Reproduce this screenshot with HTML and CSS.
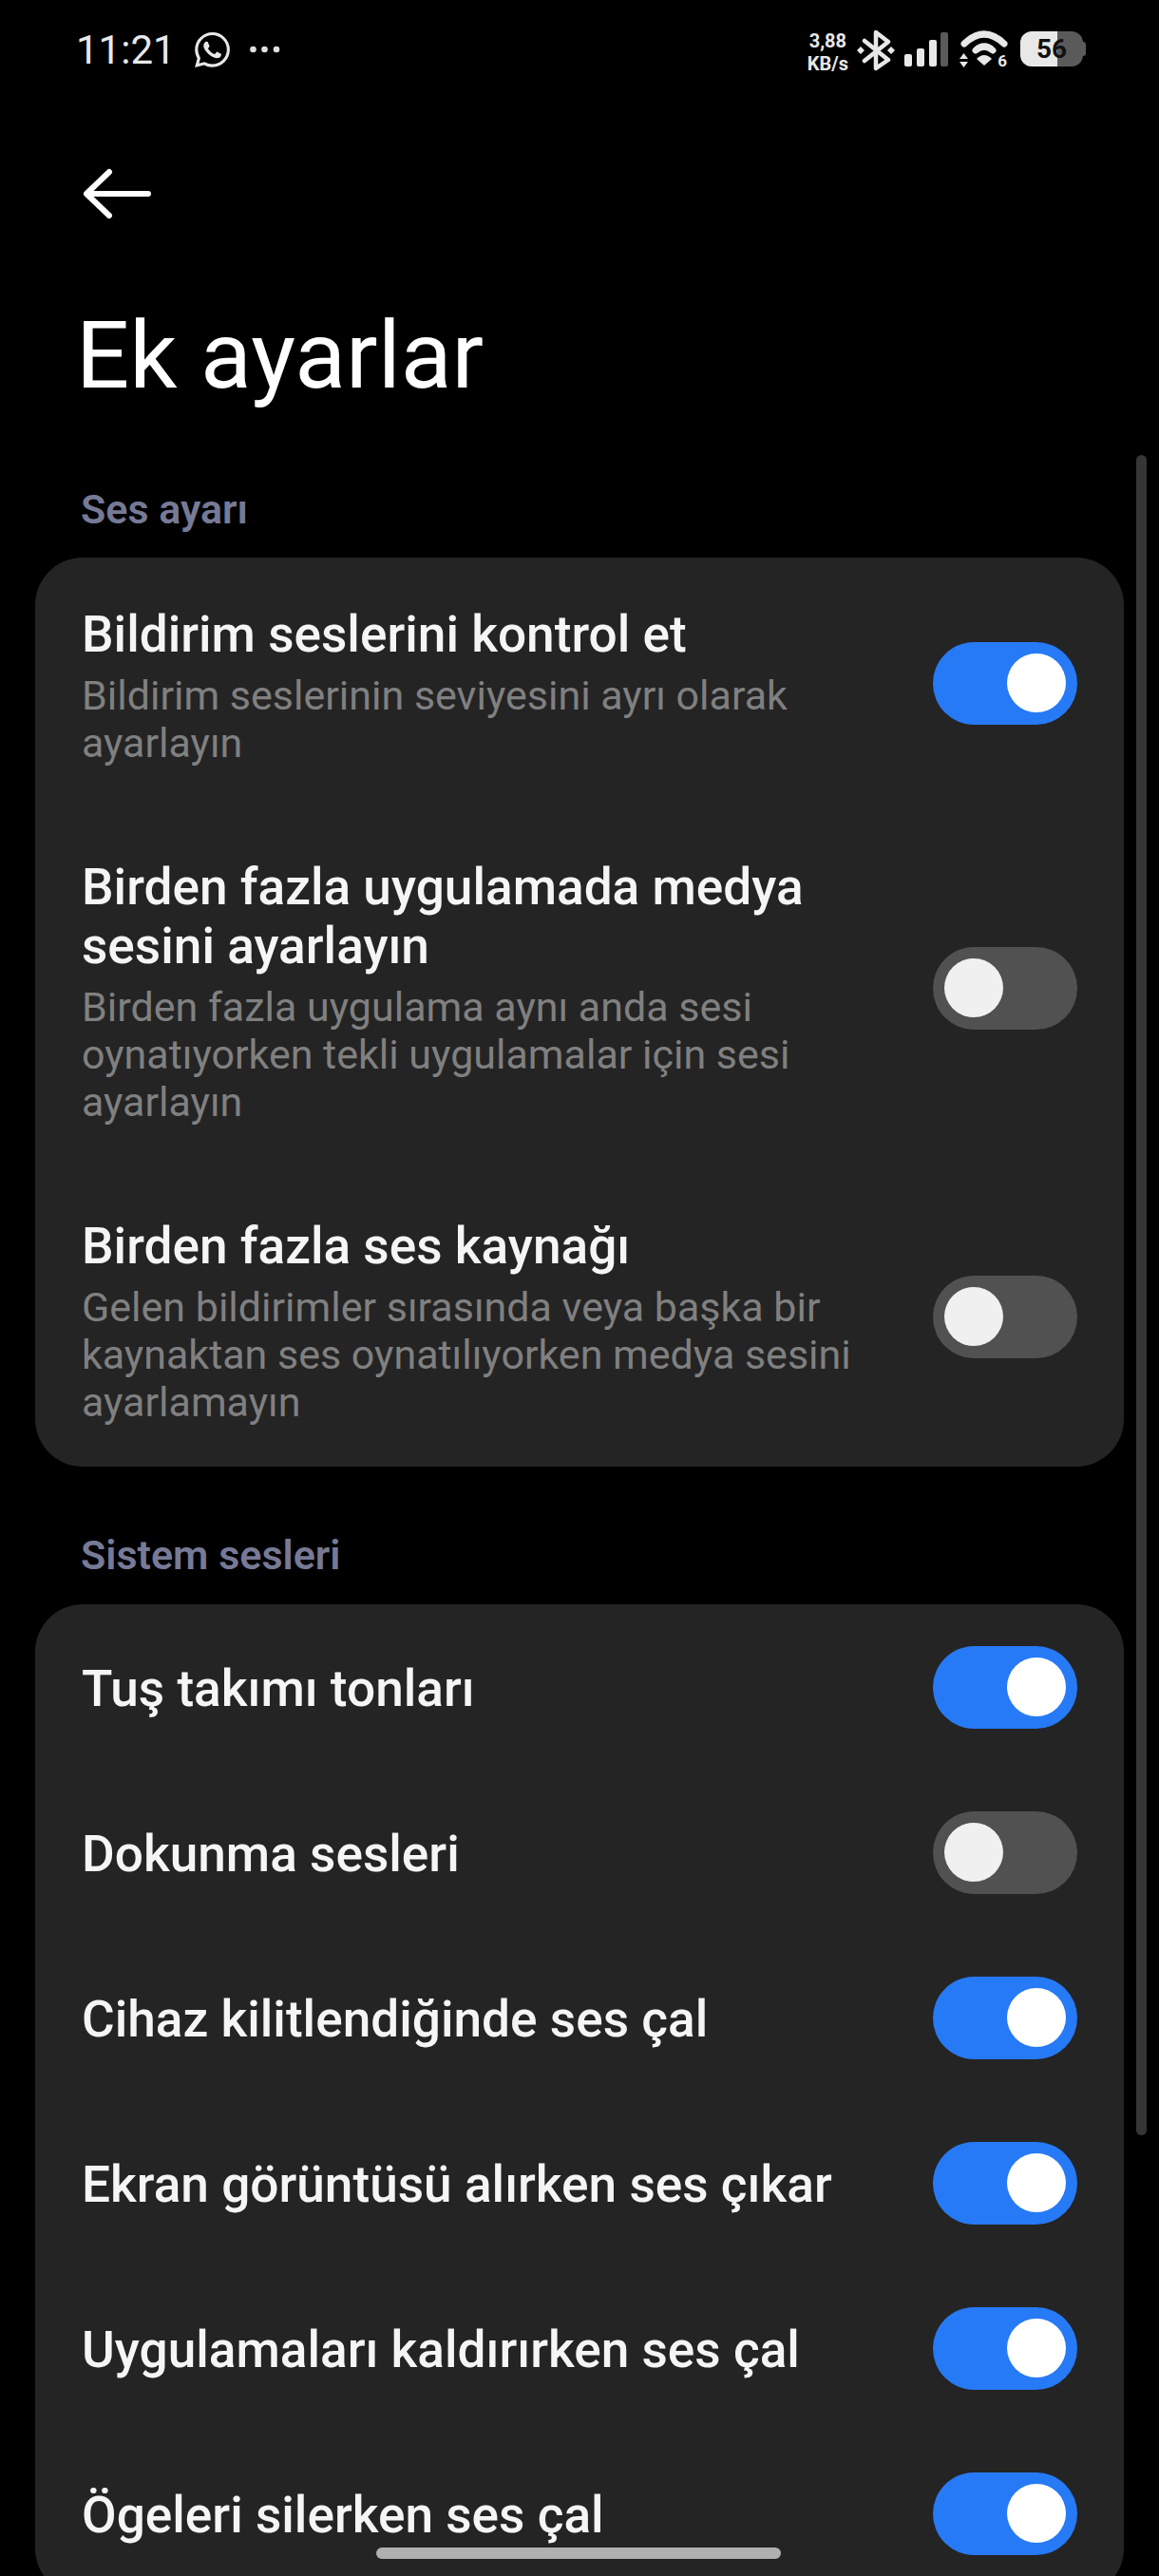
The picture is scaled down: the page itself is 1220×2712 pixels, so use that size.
FILE: index.html
```html
<!DOCTYPE html>
<html lang="tr">
<head>
    <meta charset="UTF-8">
    <meta name="viewport" content="width=device-width, initial-scale=1.0">
    <title>Ek ayarlar</title>
    <link rel="stylesheet" href="styles.css">
</head>
<body>
    <div class="status-bar">
        <div class="status-left">
            <span class="clock">11:21</span>
            <svg class="icon-whatsapp" viewBox="0 0 24 24"><path fill="#e8e8e8" d="M17.472 14.382c-.297-.149-1.758-.867-2.03-.967-.273-.099-.471-.148-.67.15-.197.297-.767.966-.94 1.164-.173.199-.347.223-.644.075-.297-.15-1.255-.463-2.39-1.475-.883-.788-1.48-1.761-1.653-2.059-.173-.297-.018-.458.13-.606.134-.133.298-.347.446-.52.149-.174.198-.298.298-.497.099-.198.05-.371-.025-.52-.075-.149-.669-1.612-.916-2.207-.242-.579-.487-.5-.669-.51-.173-.008-.371-.01-.57-.01-.198 0-.52.074-.792.372-.272.297-1.04 1.016-1.04 2.479 0 1.462 1.065 2.875 1.213 3.074.149.198 2.096 3.2 5.077 4.487.709.306 1.262.489 1.694.625.712.227 1.36.195 1.871.118.571-.085 1.758-.719 2.006-1.413.248-.694.248-1.289.173-1.413-.074-.124-.272-.198-.57-.347m-5.421 7.403h-.004a9.87 9.87 0 01-5.031-1.378l-.361-.214-3.741.982.998-3.648-.235-.374a9.86 9.86 0 01-1.51-5.26c.001-5.45 4.436-9.884 9.888-9.884 2.64 0 5.122 1.03 6.988 2.898a9.825 9.825 0 012.893 6.994c-.003 5.45-4.437 9.884-9.885 9.884m8.413-18.297A11.815 11.815 0 0012.05 0C5.495 0 .16 5.335.157 11.892c0 2.096.547 4.142 1.588 5.945L.057 24l6.305-1.654a11.882 11.882 0 005.683 1.448h.005c6.554 0 11.89-5.335 11.893-11.893a11.821 11.821 0 00-3.48-8.413z"/></svg>
            <svg class="icon-dots" viewBox="0 0 32 8"><circle cx="3.5" cy="4" r="3.3" fill="#e0e0e0"/><circle cx="15.5" cy="4" r="3.3" fill="#e0e0e0"/><circle cx="28" cy="4" r="3.3" fill="#e0e0e0"/></svg>
        </div>
        <div class="status-right">
            <div class="speed"><span>3,88</span><span>KB/s</span></div>
            <svg class="icon-bt" viewBox="0 0 40 44"><path d="M8 12 33 32 20 41V3L33 13 8 33" fill="none" stroke="#e8e8e8" stroke-width="4.5" stroke-linejoin="round" stroke-linecap="round"/><path d="M4 18l4 4-4 4-4-4zM36 18l4 4-4 4-4-4z" fill="#e8e8e8"/></svg>
            <svg class="icon-signal" viewBox="0 0 46 36"><rect x="0" y="23" width="8" height="13" rx="2" fill="#e8e8e8"/><rect x="13" y="17" width="8" height="19" rx="2" fill="#e8e8e8"/><rect x="26" y="8" width="8" height="28" rx="2" fill="#e8e8e8"/><rect x="38" y="0" width="8" height="36" rx="2" fill="#5a5a5a"/></svg>
            <div class="wifi">
                <svg class="icon-wifi" viewBox="0 0 52 40"><path d="M5 14Q26-6 47 14" fill="none" stroke="#e8e8e8" stroke-width="7" stroke-linecap="round"/><path d="M17 21Q26 13 35 21" fill="none" stroke="#e8e8e8" stroke-width="7" stroke-linecap="round"/><path d="M18 30Q26 22 34 30L26 37Z" fill="#e8e8e8"/><path d="M4.500 24 9 30H0ZM4.500 39 0 33H9Z" fill="#e8e8e8"/></svg>
                <span class="wifi-num">6</span>
            </div>
            <div class="battery">56</div>
        </div>
    </div>

    <div class="back-row">
        <svg class="icon-back" viewBox="0 0 78 56"><path d="M3 28H68M27 5 3 28 27 51" fill="none" stroke="#fff" stroke-width="6" stroke-linecap="round" stroke-linejoin="round"/></svg>
    </div>

    <h1 class="page-title">Ek ayarlar</h1>

    <h2 class="section-label">Ses ayarı</h2>
    <div class="card">
        <div class="row row-first">
            <div class="row-text">
                <div class="row-title">Bildirim seslerini kontrol et</div>
                <div class="row-desc">Bildirim seslerinin seviyesini ayrı olarak ayarlayın</div>
            </div>
            <div class="toggle on"></div>
        </div>
        <div class="row">
            <div class="row-text">
                <div class="row-title">Birden fazla uygulamada medya sesini ayarlayın</div>
                <div class="row-desc">Birden fazla uygulama aynı anda sesi oynatıyorken tekli uygulamalar için sesi ayarlayın</div>
            </div>
            <div class="toggle"></div>
        </div>
        <div class="row row-last">
            <div class="row-text">
                <div class="row-title">Birden fazla ses kaynağı</div>
                <div class="row-desc">Gelen bildirimler sırasında veya başka bir kaynaktan ses oynatılıyorken medya sesini ayarlamayın</div>
            </div>
            <div class="toggle"></div>
        </div>
    </div>

    <h2 class="section-label section-second">Sistem sesleri</h2>
    <div class="card">
        <div class="row row-single"><div class="row-title">Tuş takımı tonları</div><div class="toggle on"></div></div>
        <div class="row row-single"><div class="row-title">Dokunma sesleri</div><div class="toggle"></div></div>
        <div class="row row-single"><div class="row-title">Cihaz kilitlendiğinde ses çal</div><div class="toggle on"></div></div>
        <div class="row row-single"><div class="row-title">Ekran görüntüsü alırken ses çıkar</div><div class="toggle on"></div></div>
        <div class="row row-single"><div class="row-title">Uygulamaları kaldırırken ses çal</div><div class="toggle on"></div></div>
        <div class="row row-single"><div class="row-title">Ögeleri silerken ses çal</div><div class="toggle on"></div></div>
    </div>

    <div class="scrollbar"></div>
    <div class="home-indicator"></div>
</body>
</html>
```

FILE: styles.css
```css
/* Global Styles */

* {
    margin: 0;
    padding: 0;
    box-sizing: border-box;
}

body {
    position: relative;
    height: 2712px;
    overflow: hidden;
    background-color: #000;
    color: #f5f5f5;
    font-family: Roboto, "Noto Sans", sans-serif;
}

/* Status Bar */

.status-bar {
    display: flex;
    justify-content: space-between;
    height: 176px;
    padding: 31px 77px 0 80px;
}

.status-left,
.status-right {
    display: flex;
    align-items: flex-start;
}

.clock {
    font-size: 42px;
    line-height: 44px;
    color: #e8e8e8;
}

.icon-whatsapp {
    width: 37px;
    height: 37px;
    margin: 3px 0 0 20px;
}

.icon-dots {
    width: 32px;
    height: 8px;
    margin: 17px 0 0 21px;
}

.speed {
    display: flex;
    flex-direction: column;
    font-size: 20px;
    font-weight: 700;
    line-height: 24px;
    color: #e8e8e8;
    text-align: center;
}

.icon-bt {
    width: 40px;
    height: 44px;
    margin: 0 0 0 9px;
}

.icon-signal {
    width: 46px;
    height: 36px;
    margin: 3px 0 0 10px;
}

.wifi {
    position: relative;
    width: 52px;
    height: 40px;
    margin: 1px 0 0 12px;
}

.icon-wifi {
    display: block;
    width: 52px;
    height: 40px;
}

.wifi-num {
    position: absolute;
    right: 2px;
    bottom: -2px;
    font-size: 17px;
    font-weight: 700;
    line-height: 20px;
    color: #e8e8e8;
}

.battery {
    position: relative;
    width: 66px;
    height: 37px;
    margin: 2px 3px 0 12px;
    border-radius: 12px;
    background: linear-gradient(90deg, #e8e8e8 59%, #5a5a5a 59%);
    color: #111;
    font-size: 28px;
    font-weight: 700;
    line-height: 37px;
    text-align: center;
}

.battery::after {
    content: "";
    position: absolute;
    top: 11px;
    right: -3px;
    width: 3px;
    height: 15px;
    border-radius: 0 3px 3px 0;
    background-color: #5a5a5a;
}

/* Header */

.back-row {
    padding-left: 88px;
    height: 72px;
}

.icon-back {
    display: block;
    width: 78px;
    height: 56px;
}

.page-title {
    margin: 71px 0 0 80px;
    font-size: 99px;
    font-weight: 400;
    line-height: 110px;
    color: #fff;
}

.section-label {
    margin: 79px 0 0 85px;
    height: 79px;
    font-size: 43px;
    font-weight: 600;
    line-height: 56px;
    color: #777a96;
}

.section-second {
    margin-top: 67px;
    height: 78px;
    line-height: 52px;
}

/* Cards */

.card {
    width: 1146px;
    margin-left: 37px;
    border-radius: 50px;
    background-color: #242424;
}

.row {
    display: flex;
    align-items: center;
    justify-content: space-between;
    padding: 48px 49px 48px 49px;
}

.row .row-text + .toggle {
    margin-bottom: 7px;
}

.row-first {
    padding-top: 50px;
}

.row-first .row-text + .toggle {
    margin-bottom: 5px;
}

.row-last {
    padding-bottom: 43px;
}

.row-last .row-text + .toggle {
    margin-bottom: 10px;
}

.row-single {
    height: 174px;
    padding-top: 0;
    padding-bottom: 0;
}

.row-single .row-title {
    padding-top: 4px;
}

.row-text {
    width: 830px;
}

.row-title {
    font-size: 53.200px;
    font-weight: 500;
    line-height: 62px;
}

.row-desc {
    margin-top: 8px;
    font-size: 43px;
    line-height: 50px;
    color: #808080;
}

/* Toggles */

.toggle {
    position: relative;
    flex-shrink: 0;
    width: 152px;
    height: 87px;
    border-radius: 44px;
    background-color: #515151;
}

.toggle::after {
    content: "";
    position: absolute;
    top: 12px;
    left: 12px;
    width: 62px;
    height: 62px;
    border-radius: 50%;
    background-color: #f0f0f0;
}

.toggle.on {
    background-color: #277af5;
}

.toggle.on::after {
    left: 78px;
    background-color: #fff;
}

/* Overlays */

.scrollbar {
    position: absolute;
    top: 479px;
    left: 1196px;
    width: 11px;
    height: 1769px;
    border-radius: 6px;
    background-color: #363636;
}

.home-indicator {
    position: absolute;
    top: 2682px;
    left: 396px;
    width: 426px;
    height: 12px;
    border-radius: 6px;
    background-color: #b0b0b0;
}
```
